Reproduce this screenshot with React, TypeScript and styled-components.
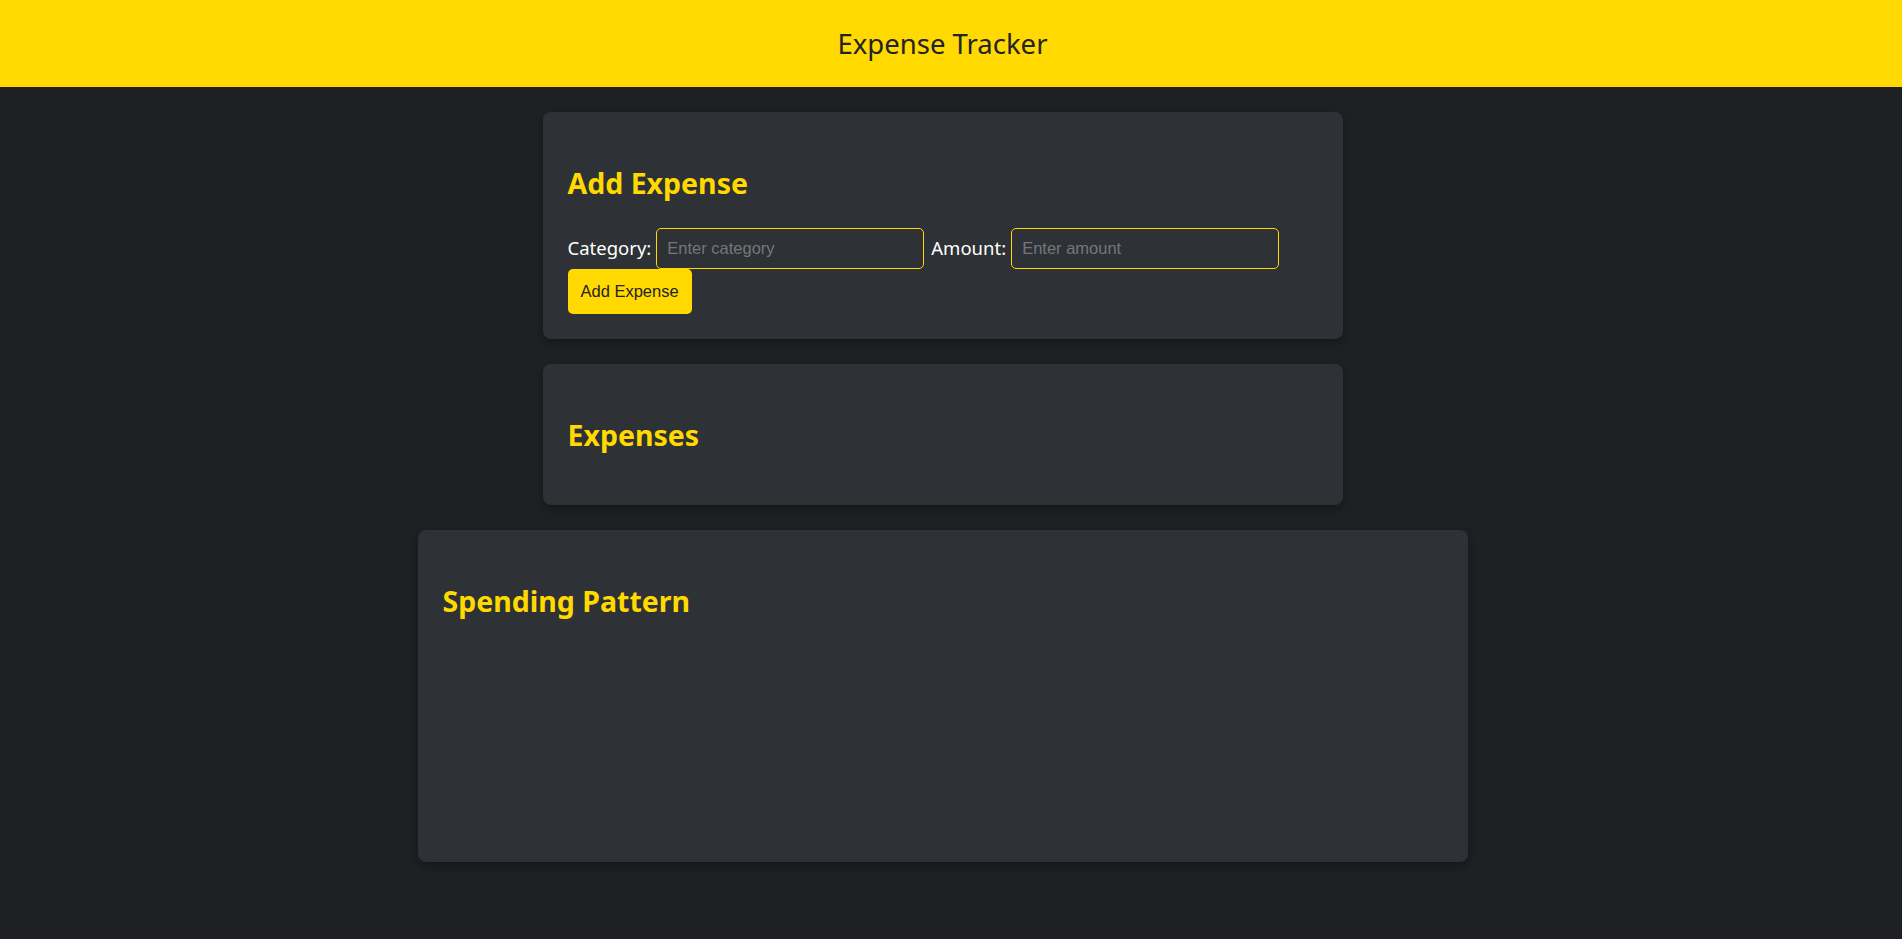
import styled, { createGlobalStyle } from "styled-components";

const GlobalStyle = createGlobalStyle`
  * {
    box-sizing: border-box;
  }
  body {
    margin: 0;
    background-color: #1f2023;
    font-family: "Segoe UI", "Noto Sans", sans-serif;
    color: #fff;
  }
`;

const Page = styled.div`
  min-height: 100vh;
  display: flex;
  flex-direction: column;
`;

const Header = styled.header`
  background-color: #ffd900;
  height: 87px;
  padding-right: 17px;
  display: flex;
  align-items: center;
  justify-content: center;
`;

const Title = styled.h1`
  margin: 0;
  color: #222326;
  font-size: 27.5px;
  font-weight: 400;
`;

const Main = styled.main`
  display: flex;
  flex-direction: column;
  align-items: center;
  gap: 25px;
  padding: 25px 17px 25px 0;
`;

const Card = styled.section<{ $width: number }>`
  width: ${(p) => p.$width}px;
  background-color: #2e3135;
  border-radius: 8px;
  padding: 25px;
  box-shadow: 0 4px 10px rgba(0, 0, 0, 0.3);
`;

const Heading = styled.h2`
  color: #ffd900;
  font-size: 28.5px;
  font-weight: 700;
  line-height: 41px;
  margin: 26px 0 24px;
`;

const Form = styled.form`
  display: flex;
  flex-wrap: wrap;
  align-items: center;
`;

const Label = styled.label`
  font-size: 18.5px;
  line-height: 24px;
  padding-bottom: 2px;
  color: #fff;
  margin-right: 5px;
`;

const Input = styled.input`
  width: 268px;
  height: 41px;
  padding: 10px;
  margin-right: 7px;
  font-family: "Liberation Sans", Arial, sans-serif;
  font-size: 16.5px;
  color: #fff;
  background-color: transparent;
  border: 1px solid #ffd900;
  border-radius: 5px;
  outline: none;
  &::placeholder {
    color: #75777a;
  }
`;

const Button = styled.button`
  height: 45px;
  padding: 0 13px;
  font-family: "Liberation Sans", Arial, sans-serif;
  font-size: 16.5px;
  color: #222326;
  background-color: #ffd900;
  border: none;
  border-radius: 5px;
  cursor: pointer;
`;

const Break = styled.div`
  flex-basis: 100%;
  height: 0;
`;

const ChartArea = styled.div`
  height: 191px;
`;

export default function App() {
  return (
    <Page>
      <GlobalStyle />
      <Header>
        <Title>Expense Tracker</Title>
      </Header>
      <Main>
        <Card $width={800}>
          <Heading>Add Expense</Heading>
          <Form onSubmit={(e) => e.preventDefault()}>
            <Label>Category:</Label>
            <Input type="text" placeholder="Enter category" />
            <Label>Amount:</Label>
            <Input type="number" placeholder="Enter amount" />
            <Break />
            <Button type="submit">Add Expense</Button>
          </Form>
        </Card>
        <Card $width={800}>
          <Heading>Expenses</Heading>
        </Card>
        <Card $width={1050}>
          <Heading>Spending Pattern</Heading>
          <ChartArea />
        </Card>
      </Main>
    </Page>
  );
}
